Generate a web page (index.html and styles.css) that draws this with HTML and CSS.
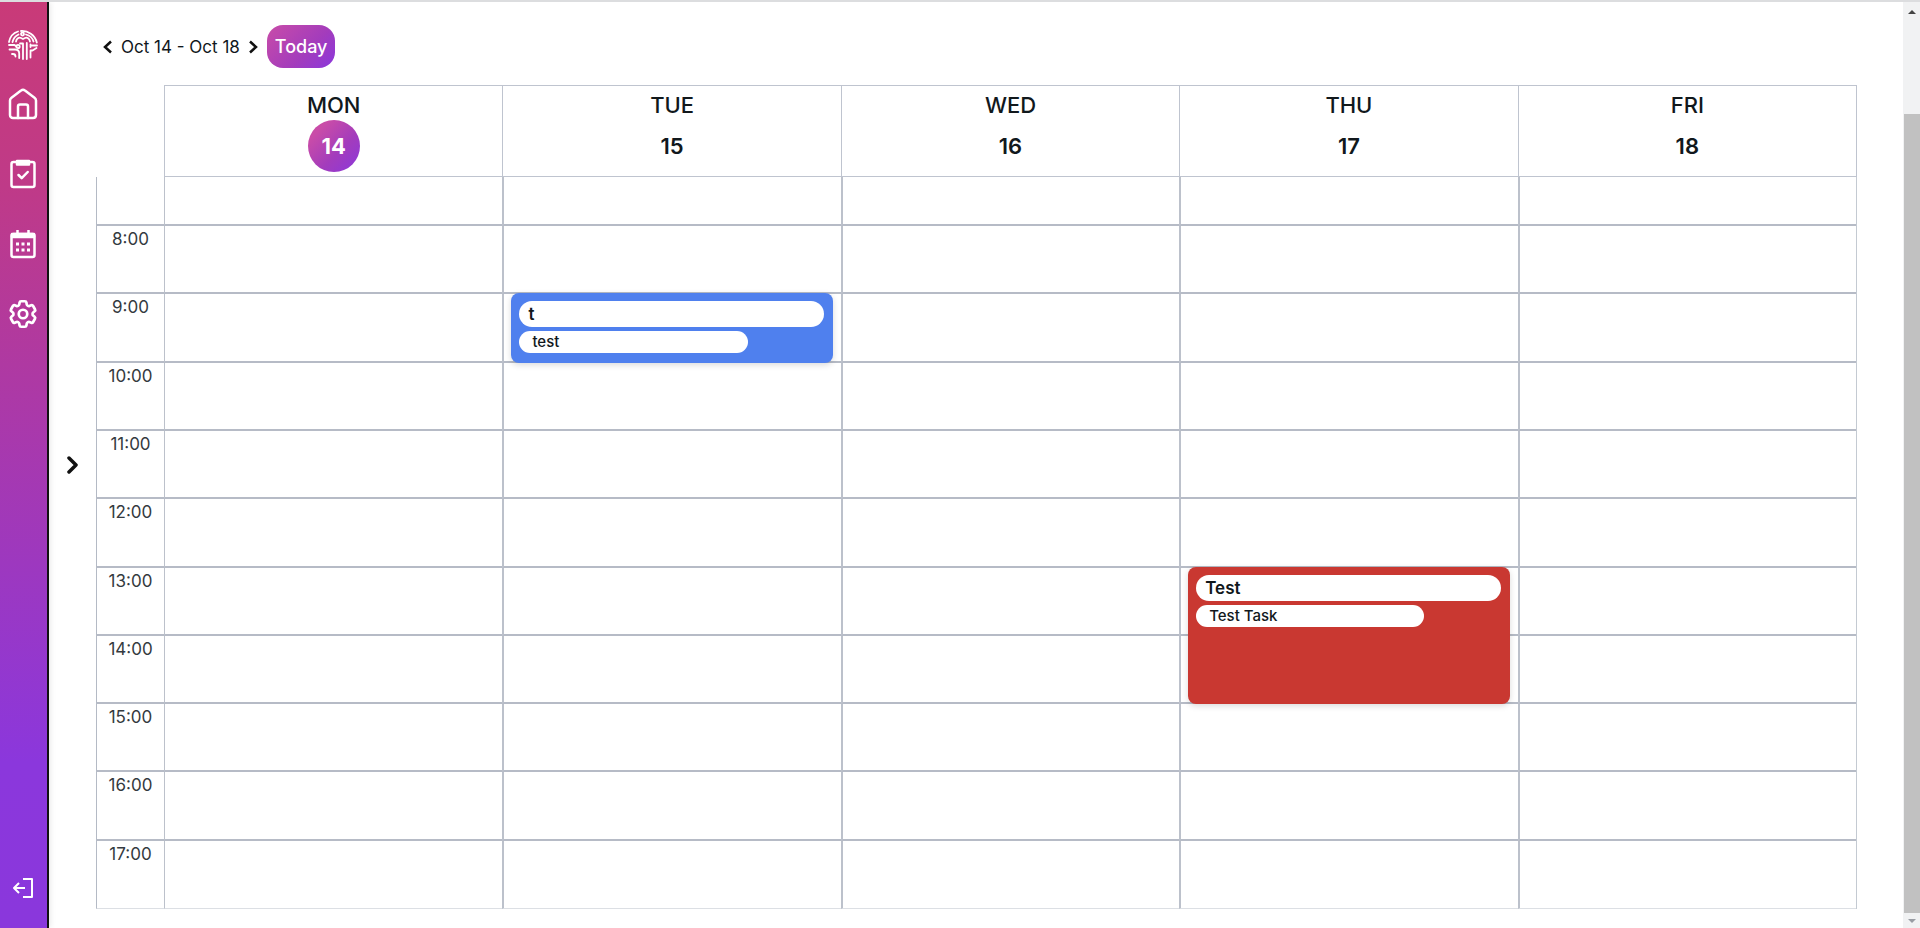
FILE: index.html
```html
<!DOCTYPE html>
<html lang="en">
<head>
    <meta charset="UTF-8">
    <meta name="viewport" content="width=device-width, initial-scale=1.0">
    <title>Calendar</title>
    <link rel="stylesheet" href="styles.css">
</head>
<body>
    <nav class="sidebar">
        <a href="#" class="logo" aria-label="Logo">
            <svg width="30" height="30" viewBox="0 0 30 30" fill="none" stroke="#fff" stroke-width="1.800" stroke-linecap="round" stroke-linejoin="round">
                <path d="M1 12C2 7 5 3 10 1.500M13 1c7-.5 14 4 15.800 11.500"/>
                <circle cx="14.500" cy="4" r="1.500"/>
                <path d="M4.500 12c.8-3.500 3-6 6-7.500M18 4.500c4 1 6.500 3.500 7.500 7"/>
                <path d="M8 11.500c.5-3 3-4.500 5-3.500l2 1 2-1c2-1 4.500.5 5 3.500"/>
                <path d="M1 15h5.500l2 1.500"/>
                <circle cx="10" cy="16.500" r="1.700"/>
                <path d="M1.500 19.500H7c3 0 4.200 1.500 4.200 4V28M4 24h1c1.500 0 2.500 1 2.500 2.500"/>
                <path d="M15 29V13.500h-3M18.800 29V13M22.500 27.500v-7h2l4-2.500M22.500 17v-2.500M22.500 15.500H29"/>
            </svg>
        </a>
        <a href="#" aria-label="Home">
            <svg width="30" height="32" viewBox="0 0 30 32" fill="none" stroke="#fff" stroke-width="2.500" stroke-linejoin="round" stroke-linecap="round">
                <path d="M2 12.500c0-1 .5-2 1.500-2.800L13 2.600c1.200-1 2.800-1 4 0l9.500 7.100c1 .8 1.500 1.800 1.500 2.800V27c0 1.800-1.200 3-3 3H5c-1.800 0-3-1.200-3-3z"/>
                <path d="M10 30V18.500c0-1.200.8-2 2-2h6c1.200 0 2 .8 2 2V30"/>
            </svg>
        </a>
        <a href="#" aria-label="Tasks">
            <svg width="26" height="30" viewBox="0 0 26 30" fill="none" stroke="#fff" stroke-width="2.500" stroke-linejoin="round" stroke-linecap="round">
                <path d="M6 3H3.500C2.300 3 1.500 3.800 1.500 5v21c0 1.200.8 2 2 2h19c1.200 0 2-.8 2-2V5c0-1.200-.8-2-2-2H20"/>
                <path d="M7 2h12v3.500H7z" fill="#fff"/>
                <path d="M8.500 16l3.200 3.200 6-6.200"/>
            </svg>
        </a>
        <a href="#" aria-label="Calendar">
            <svg width="26" height="30" viewBox="0 0 26 30" fill="none" stroke="#fff" stroke-width="2.500" stroke-linejoin="round">
                <rect x="1.500" y="5" width="23" height="23" rx="2"/>
                <path d="M2 5h22v3H2zM7.500 1v4M18.500 1v4" fill="#fff"/>
                <path d="M6 15h3M11.500 15h3M17 15h3M6 21h3M11.500 21h3M17 21h3" stroke-width="3"/>
            </svg>
        </a>
        <a href="#" aria-label="Settings">
            <svg width="34" height="34" viewBox="0 0 24 24" fill="none" stroke="#fff" stroke-width="1.900" stroke-linejoin="round" stroke-linecap="round">
                <path d="M9.594 3.940c.09-.542.56-.94 1.110-.94h2.593c.55 0 1.020.398 1.110.94l.213 1.281c.063.374.313.686.645.87.074.04.147.083.22.127.325.196.72.257 1.075.124l1.217-.456a1.125 1.125 0 0 1 1.370.49l1.296 2.247a1.125 1.125 0 0 1-.26 1.431l-1.003.827c-.293.241-.438.613-.43.992a7.723 7.723 0 0 1 0 .255c-.008.378.137.75.43.991l1.004.827c.424.35.534.955.26 1.430l-1.298 2.247a1.125 1.125 0 0 1-1.369.491l-1.217-.456c-.355-.133-.75-.072-1.076.124a6.470 6.470 0 0 1-.22.128c-.331.183-.581.495-.644.869l-.213 1.281c-.09.543-.56.94-1.110.94h-2.594c-.55 0-1.019-.398-1.110-.94l-.213-1.281c-.062-.374-.312-.686-.644-.87a6.520 6.520 0 0 1-.22-.127c-.325-.196-.72-.257-1.076-.124l-1.217.456a1.125 1.125 0 0 1-1.369-.49l-1.297-2.247a1.125 1.125 0 0 1 .26-1.431l1.004-.827c.292-.24.437-.613.43-.991a6.932 6.932 0 0 1 0-.255c.007-.38-.138-.751-.43-.992l-1.004-.827a1.125 1.125 0 0 1-.26-1.430l1.297-2.247a1.125 1.125 0 0 1 1.370-.491l1.216.456c.356.133.751.072 1.076-.124.072-.044.146-.086.22-.128.332-.183.582-.495.644-.869z"/>
                <circle cx="12" cy="12" r="3"/>
            </svg>
        </a>
        <a href="#" class="logout" aria-label="Log out">
            <svg width="22" height="22" viewBox="0 0 22 22" fill="none" stroke="#fff" stroke-width="2" stroke-linejoin="round">
                <path d="M11 2h9v18h-9M13 11H2M7 6l-5 5 5 5"/>
            </svg>
        </a>
    </nav>

    <button class="drawer-toggle" aria-label="Open panel">
        <svg width="12" height="18" viewBox="0 0 12 18" fill="none" stroke="#111" stroke-width="3.500" stroke-linecap="round" stroke-linejoin="round"><path d="M2 2l7 7-7 7"/></svg>
    </button>

    <main class="calendar">
        <div class="toolbar">
            <button class="arrow" aria-label="Previous week">
                <svg width="9" height="14" viewBox="0 0 9 14" fill="none" stroke="#111" stroke-width="2.500"><path d="M8 1.500L2 7l6 5.500"/></svg>
            </button>
            <span class="range">Oct 14 - Oct 18</span>
            <button class="arrow" aria-label="Next week">
                <svg width="9" height="14" viewBox="0 0 9 14" fill="none" stroke="#111" stroke-width="2.500"><path d="M1 1.500L7 7l-6 5.500"/></svg>
            </button>
            <button class="today">Today</button>
        </div>

        <div class="days">
            <div class="day">MON<span class="date current">14</span></div>
            <div class="day">TUE<span class="date">15</span></div>
            <div class="day">WED<span class="date">16</span></div>
            <div class="day">THU<span class="date">17</span></div>
            <div class="day">FRI<span class="date">18</span></div>
        </div>

        <div class="grid" id="grid">
            <div class="event blue">
                <div class="event-title">t</div>
                <div class="event-task">test</div>
            </div>
            <div class="event red">
                <div class="event-title">Test</div>
                <div class="event-task">Test Task</div>
            </div>
        </div>
    </main>

    <div class="scrollbar" aria-hidden="true">
        <span class="up"></span>
        <span class="thumb"></span>
        <span class="down"></span>
    </div>

    <script>
        const grid = document.getElementById('grid');

        // row 1 is the cut-off end of 7:00, the rest are full hours
        for (let row = 1; row <= 11; row++) {
            for (let col = 1; col <= 6; col++) {
                const cell = document.createElement('div');
                cell.className = col === 1 ? 'cell time' : 'cell';
                cell.style.gridArea = row + ' / ' + col;
                if (col === 1 && row > 1) {
                    cell.textContent = (row + 6) + ':00';
                }
                grid.appendChild(cell);
            }
        }
    </script>
</body>
</html>
```
FILE: styles.css
```css
* {
    box-sizing: border-box;
}
body {
    display: flex;
    min-height: 100vh;
    margin: 0;
    border-top: 2px solid #dcdddf;
    background: #fff;
    color: #11181c;
    font-family: Inter, sans-serif;
}
button {
    padding: 0;
    border: none;
    background: none;
    font-family: inherit;
    cursor: pointer;
}
svg {
    display: block;
}
.sidebar {
    display: flex;
    flex-direction: column;
    align-items: center;
    flex: none;
    width: 49px;
    padding: 23px 1px 24px 0;
    border-right: 2px solid #111;
    background: linear-gradient(#c93a78, #bf3a88 20%, #8b37dc 82%, #8a37dc);
    box-shadow: 1px 0 6px rgba(0, 0, 0, 0.1);
}
.sidebar a {
    display: flex;
    align-items: center;
    justify-content: center;
    width: 100%;
    height: 70px;
}
.sidebar .logo {
    height: 40px;
    margin-bottom: 4px;
}
.sidebar .logout {
    height: 32px;
    margin-top: auto;
}
.drawer-toggle {
    align-self: center;
    display: flex;
    justify-content: center;
    width: 47px;
}
.calendar {
    display: flex;
    flex-direction: column;
    flex: 1;
    padding: 23px 46px 19px 0;
}
.toolbar {
    display: flex;
    align-items: center;
    gap: 9px;
    padding-left: 7px;
    margin-bottom: 17px;
}
.range {
    font-size: 17px;
}
.today {
    height: 43px;
    padding: 0 8px;
    border-radius: 16px;
    background: linear-gradient(135deg, #c94ca8, #a33cbc 60%, #8b37dc);
    color: #fff;
    font-size: 18px;
    font-weight: 500;
}
.days {
    display: grid;
    grid-template-columns: repeat(5, 1fr);
    margin-left: 68px;
    border: 1px solid #bfc4cf;
    border-left: none;
}
.day {
    display: flex;
    flex-direction: column;
    align-items: center;
    height: 90px;
    padding-top: 5px;
    border-left: 1px solid #bfc4cf;
    font-size: 22px;
    font-weight: 500;
    line-height: 29px;
}
.date {
    width: 52px;
    border-radius: 50%;
    font-weight: 600;
    line-height: 52px;
    text-align: center;
}
.current {
    background: linear-gradient(135deg, #c94ca8 20%, #a33cbc 60%, #8b37dc);
    color: #fff;
    font-weight: 700;
}
.grid {
    display: grid;
    flex: 1;
    grid-template-columns: 68px repeat(5, 1fr);
    grid-template-rows: 49px repeat(10, minmax(60px, 1fr));
    border-right: 1px solid #c4cad2;
}
.cell {
    border-left: 2px solid #bcc1cb;
    border-bottom: 2px solid #b6bbc6;
}
.cell:nth-last-child(-n+6) {
    border-bottom: 1px solid #dcdfe4;
}
.time {
    padding-top: 2px;
    border-left: 1px solid #b4bac5;
    color: #343a40;
    font-size: 17px;
    line-height: 22px;
    text-align: center;
}
.time + .cell {
    border-left-width: 1px;
}
.event {
    z-index: 1;
    margin: -1px 8px 0 9px;
    padding: 8px 9px 6px 8px;
    border-radius: 8px;
    box-shadow: 0 2px 6px rgba(0, 0, 0, 0.15);
}
.blue {
    grid-area: 3 / 3;
    background: #4f80ee;
}
.red {
    grid-area: 7 / 5 / span 2;
    background: #c93831;
}
.event-title {
    padding: 0 9px;
    border-radius: 13px;
    background: #fff;
    font-size: 17px;
    font-weight: 600;
    line-height: 26px;
}
.event-task {
    width: 75%;
    margin-top: 4px;
    padding: 0 13px;
    border-radius: 11px;
    background: #fff;
    font-size: 15px;
    font-weight: 500;
    line-height: 22px;
}
.scrollbar {
    display: flex;
    flex-direction: column;
    align-items: center;
    flex: none;
    width: 17px;
    padding: 8px 0 5px;
    background: #f1f2f3;
}
.up, .down {
    border: 4px solid transparent;
}
.up {
    border-top: none;
    border-bottom: 4px solid #444;
}
.thumb {
    flex: 1;
    width: 16px;
    margin: 100px 0 6px 1px;
    background: #c1c1c1;
}
.down {
    border-bottom: none;
    border-top: 4px solid #989ca3;
}
```
